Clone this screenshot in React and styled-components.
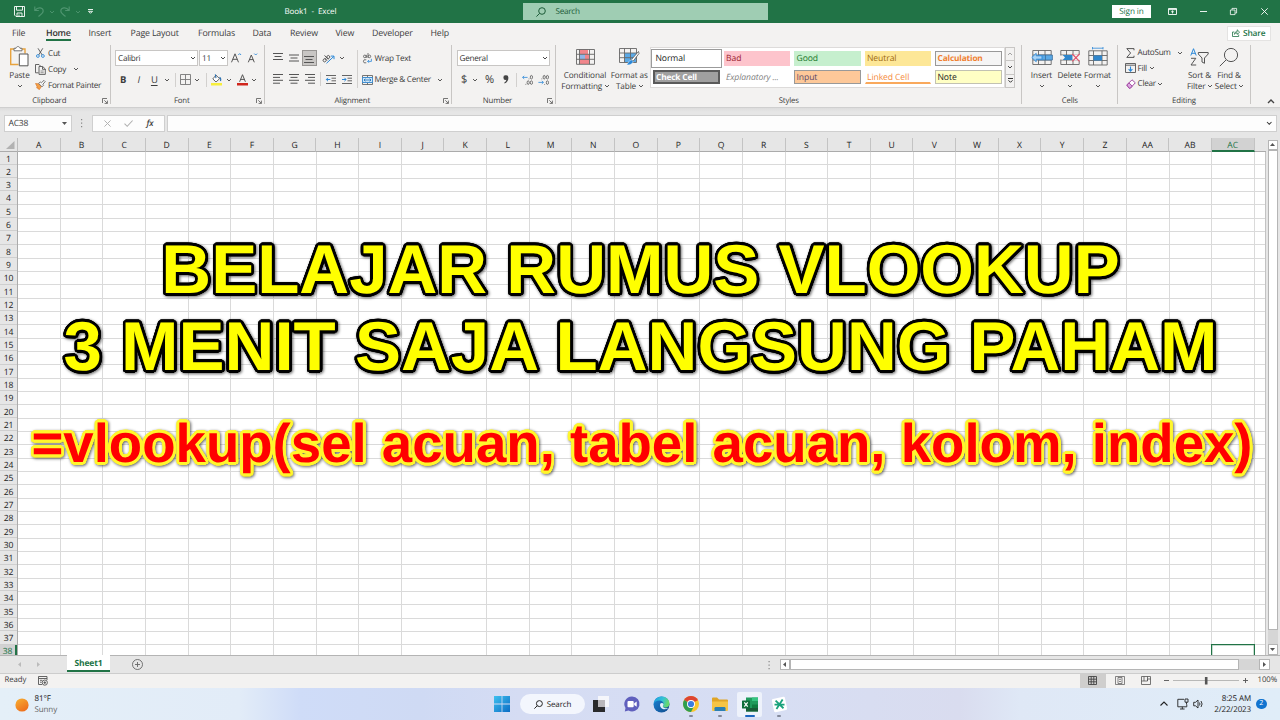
import React from "react";
import styled, { createGlobalStyle } from "styled-components";

const GlobalStyle = createGlobalStyle`
    * { box-sizing: border-box; }
    body {
        margin: 0;
        overflow: hidden;
        font-family: "Open Sans", "Noto Sans", sans-serif;
        color: #3c3c3c;
        text-rendering: geometricPrecision;
    }
    svg { display: block; flex: none; overflow: visible; }
`;

const Screen = styled.div`
    position: relative;
    display: flex;
    flex-direction: column;
    width: 1280px;
    height: 720px;
    overflow: hidden;
    background: #e6e6e6;
    font-size: 8.2px;
    letter-spacing: -0.28px;
    line-height: 11px;
    white-space: nowrap;
`;

/* ---------- title bar ---------- */

const TitleBar = styled.div`
    display: flex;
    align-items: center;
    flex: none;
    height: 23px;
    background: #217346;
    color: #fff;
`;

const QuickAccess = styled.div`
    display: flex;
    align-items: center;
    width: 284.5px;
    padding-left: 13px;
`;

const BookName = styled.div`
    width: 238px;
    font-size: 8px;
    letter-spacing: -0.1px;
    white-space: pre;
`;

const TitleSearch = styled.div`
    display: flex;
    align-items: center;
    gap: 10px;
    width: 245.5px;
    height: 17px;
    padding-left: 13px;
    background: #9fcdb3;
    color: #1d5c39;
`;

const SignIn = styled.div`
    width: 39px;
    height: 13px;
    margin-left: 344px;
    background: #fff;
    color: #217346;
    letter-spacing: -0.1px;
    line-height: 13px;
    text-align: center;
`;

const WindowButtons = styled.div`
    display: flex;
    align-items: center;
    padding-left: 6px;
    & > div {
        display: flex;
        justify-content: center;
        width: 30.7px;
    }
`;

/* ---------- ribbon ---------- */

const TabRow = styled.div`
    display: flex;
    flex: none;
    height: 21px;
    padding-left: 12px;
    background: #f3f2f1;
    font-size: 8.8px;
    letter-spacing: -0.15px;
`;

const Tab = styled.div`
    width: ${(p) => p.$w}px;
    padding-top: 4px;
    & span {
        display: inline-block;
        height: 14px;
        line-height: 12px;
        ${(p) => p.$active && "border-bottom: 2px solid #217346; color: #333; font-weight: 600; letter-spacing: -0.2px;"}
    }
`;

const Share = styled.div`
    display: flex;
    align-items: center;
    justify-content: center;
    gap: 3px;
    width: 44.5px;
    height: 15px;
    margin: 2.5px 9px 0 auto;
    border: 1px solid #e4e3e2;
    background: #fff;
    color: #217346;
    font-size: 8.4px;
    font-weight: 600;
`;

const Ribbon = styled.div`
    display: flex;
    flex: none;
    height: 63.5px;
    background: #f3f2f1;
    border-bottom: 1px solid #cfcfcf;
`;

const Group = styled.div`
    position: relative;
    display: flex;
    flex-direction: column;
    width: ${(p) => p.$w}px;
    flex: none;
    &::after {
        content: "";
        position: absolute;
        right: 0;
        top: 1px;
        width: 1px;
        height: 59px;
        background: #c8c6c4;
    }
`;

const GroupBody = styled.div`
    display: flex;
    height: 51px;
    padding-left: ${(p) => p.$pad || 0}px;
`;

const GroupLabel = styled.div`
    position: relative;
    height: 12px;
    padding-right: ${(p) => p.$shift || 0}px;
    line-height: 13.5px;
    text-align: center;
    font-size: 7.8px;
    letter-spacing: -0.15px;
    & svg {
        position: absolute;
        right: 3px;
        top: 3.5px;
    }
`;

const Stack = styled.div`
    display: flex;
    flex-direction: column;
    width: ${(p) => p.$w}px;
    flex: none;
    padding-top: ${(p) => p.$top || 0}px;
`;

const Row = styled.div`
    display: flex;
    align-items: center;
    height: ${(p) => p.$h}px;
`;

const Tool = styled.div`
    display: flex;
    align-items: center;
    justify-content: center;
    width: ${(p) => p.$w}px;
    height: 15.5px;
    flex: none;
    ${(p) => p.$on && "background: #c8c6c4; border: 1px solid #979593;"}
`;

const Label = styled.div`
    width: ${(p) => p.$w || "auto"};
    padding-left: ${(p) => p.$gap || 0}px;
    flex: none;
`;

const Divider = styled.div`
    width: 1px;
    height: ${(p) => p.$h || 14}px;
    margin: ${(p) => p.$m || "0"};
    background: #d2d0ce;
    flex: none;
`;

const BigTool = styled.div`
    display: flex;
    flex-direction: column;
    align-items: center;
    width: ${(p) => p.$w}px;
    flex: none;
    text-align: center;
    letter-spacing: -0.12px;
    & > div {
        display: flex;
        align-items: center;
        gap: 2.5px;
        height: 11px;
    }
`;

const BigIcon = styled.span`
    display: flex;
    align-items: center;
    justify-content: center;
    height: 25.5px;
`;

const Combo = styled.div`
    display: flex;
    align-items: center;
    justify-content: space-between;
    width: ${(p) => p.$w}px;
    height: 15.5px;
    margin-right: ${(p) => p.$mr || 0}px;
    padding: 0 2px;
    border: 1px solid #c8c6c4;
    background: #fff;
    color: #333;
`;

const Glyph = styled.span`
    font-size: ${(p) => p.$size || 10}px;
    font-weight: ${(p) => p.$weight || 400};
    font-style: ${(p) => (p.$italic ? "italic" : "normal")};
    text-decoration: ${(p) => (p.$under ? "underline" : "none")};
    text-underline-offset: 1.5px;
`;

const Gallery = styled.div`
    display: grid;
    grid-template-columns: repeat(5, 66.5px);
    grid-template-rows: 14.5px 14.5px;
    gap: 4px;
    width: 355px;
    height: 41px;
    margin-top: 3px;
    padding: 3px 0 0 2px;
    border: 1px solid #dddbda;
    background: #fff;
`;

const StyleCell = styled.div`
    padding-left: 1.5px;
    line-height: 13px;
    font-size: 8.6px;
    letter-spacing: -0.1px;
    background: ${(p) => p.$bg || "#fff"};
    color: ${(p) => p.$fg};
    font-weight: ${(p) => (p.$bold ? 700 : 400)};
    font-style: ${(p) => (p.$italic ? "italic" : "normal")};
    border: ${(p) => (p.$line ? `1px solid ${p.$line}` : "1px solid transparent")};
    ${(p) => p.$bold && "font-size: 8.3px; letter-spacing: -0.15px;"}
    ${(p) => p.$selected && "outline: 1px solid #9b9b9b; outline-offset: 1px; border-color: #fff;"}
    ${(p) => p.$underline && "border-bottom: 2px solid #f9a95c; line-height: 12px;"}
    ${(p) => p.$double && "border: 2px double #5a5a5a; line-height: 11px; padding-left: 1px;"}
`;

const Scroller = styled.div`
    display: flex;
    flex-direction: column;
    width: 10px;
    height: 41px;
    margin-top: 3px;
    & > div {
        display: flex;
        align-items: center;
        justify-content: center;
        flex: 1;
        border: 1px solid #c8c6c4;
        margin-top: -1px;
    }
    & > div:first-child { margin-top: 0; }
`;

const Collapse = styled.div`
    margin: 56px 0 0 17px;
`;

/* ---------- formula bar ---------- */

const FormulaRow = styled.div`
    display: flex;
    flex: none;
    height: 30.5px;
    padding: 7px 0 0 3.5px;
    background: linear-gradient(#dcdcdc, #e6e6e6 4px);
`;

const FormulaBox = styled.div`
    display: flex;
    align-items: center;
    width: ${(p) => p.$w}px;
    height: 17.5px;
    margin-right: ${(p) => p.$mr || 0}px;
    justify-content: ${(p) => p.$justify || "space-between"};
    padding: 0 4px;
    border: 1px solid #cfcfcf;
    background: #fdfdfd;
    font-size: 8.6px;
`;

const Dots = styled.div`
    width: 20.5px;
    padding: 4.5px 0 0 9px;
`;

/* ---------- sheet ---------- */

const HeaderRow = styled.div`
    display: flex;
    flex: none;
    height: 13.5px;
    font-size: 8.6px;
    font-weight: 500;
    letter-spacing: 0;
    color: #222;
`;

const Corner = styled.div`
    display: flex;
    justify-content: flex-end;
    width: 18px;
    padding: 3px 2px 0 0;
    border-right: 1px solid #bdbdbd;
    border-bottom: 1px solid #ababab;
    flex: none;
`;

const ColHead = styled.div`
    width: 42.65px;
    flex: none;
    line-height: 14px;
    text-align: center;
    border-right: 1px solid #c3c3c3;
    border-bottom: ${(p) => (p.$active ? "2px solid #217346" : "1px solid #ababab")};
    background: ${(p) => (p.$active ? "#d2d2d2" : "#e6e6e6")};
    color: ${(p) => (p.$active ? "#217346" : "#222")};
`;

const HeadEnd = styled.div`
    width: 11px;
    border-bottom: 1px solid #ababab;
`;

const SheetArea = styled.div`
    display: flex;
    flex: none;
    height: 503px;
`;

const RowHeads = styled.div`
    width: 18px;
    flex: none;
    overflow: hidden;
    border-right: 1px solid #ababab;
    font-size: 8.6px;
    font-weight: 500;
    letter-spacing: -0.1px;
    color: #222;
`;

const RowHead = styled.div`
    height: 13.335px;
    line-height: 14.6px;
    text-align: center;
    border-bottom: 1px solid #cfcfcf;
    ${(p) => p.$active && "height: 10px; line-height: 13px; background: #d2d2d2; color: #217346; border-right: 2px solid #217346; border-bottom: 0;"}
`;

const Cells = styled.div`
    position: relative;
    width: 1247.5px;
    flex: none;
    overflow: hidden;
    background-color: #fff;
    background-image:
        repeating-linear-gradient(90deg, transparent 0 41.65px, #dadada 41.65px 42.65px),
        repeating-linear-gradient(180deg, transparent 0 12.335px, #dadada 12.335px 13.335px);
    border-right: 1px solid #c3c3c3;
`;

const Cursor = styled.div`
    position: absolute;
    left: 1193px;
    top: 492px;
    width: 44px;
    height: 16px;
    border: 1px solid #217346;
    box-shadow: inset 0 0 0 0.5px rgba(33, 115, 70, 0.5);
`;

const VScroll = styled.div`
    display: flex;
    flex-direction: column;
    width: 10.5px;
    height: 515px;
    margin: -12px 0 0 2px;
`;

const ScrollButton = styled.div`
    display: flex;
    align-items: center;
    justify-content: center;
    width: ${(p) => p.$w || 10.5}px;
    height: 10.5px;
    flex: none;
    border: 1px solid #b5b5b5;
    background: #fff;
`;

const Thumb = styled.div`
    width: ${(p) => p.$w || 10.5}px;
    height: ${(p) => p.$h || 10.5}px;
    flex: none;
    border: 1px solid #b5b5b5;
    background: #fff;
`;

const Track = styled.div`
    flex: 1;
    align-self: stretch;
    background: #d6d6d6;
`;

const SheetTabs = styled.div`
    display: flex;
    flex: none;
    height: 19px;
    border-top: 1px solid #b4b4b4;
    border-bottom: 1px solid #cdcdcd;
`;

const NavArrows = styled.div`
    display: flex;
    gap: 14px;
    width: 67px;
    padding: 6px 0 0 17px;
`;

const SheetTab = styled.div`
    width: 43px;
    height: 17px;
    margin-top: -1px;
    border-bottom: 2px solid #217346;
    background: #fff;
    color: #217346;
    font-size: 8.5px;
    font-weight: 700;
    letter-spacing: -0.15px;
    line-height: 18px;
    text-align: center;
`;

const AddSheet = styled.div`
    width: 657.5px;
    padding: 3.5px 0 0 22px;
`;

const HScroll = styled.div`
    display: flex;
    width: 490px;
    height: 10.5px;
    margin: 3.5px 0 0 10px;
`;

const StatusBar = styled.div`
    display: flex;
    align-items: center;
    flex: none;
    height: 14.5px;
    padding-left: 4.5px;
    background: #f3f2f1;
    font-size: 7.8px;
    letter-spacing: -0.1px;
    line-height: 13px;
`;

const ViewButton = styled.div`
    display: flex;
    align-items: center;
    justify-content: center;
    width: 26.7px;
    height: 14.5px;
    background: ${(p) => (p.$on ? "#cfcecd" : "transparent")};
`;

/* ---------- taskbar ---------- */

const Taskbar = styled.div`
    display: flex;
    align-items: center;
    flex: none;
    height: 32px;
    background: linear-gradient(90deg, #e4eff8 0, #e2ecf8 240px, #cfdcf8 300px, #cfdaf4 420px, #d5dcf3 520px, #d7def3 780px, #d9dcef 960px, #dfe8f6 1020px, #e0edf8 1280px);
    color: #222;
    font-size: 8px;
    letter-spacing: -0.12px;
`;

const Weather = styled.div`
    display: flex;
    align-items: center;
    gap: 6px;
    width: 487.5px;
    padding: 1.5px 0 0 14.5px;
    line-height: 10.6px;
    & small {
        display: block;
        font-size: 8px;
        color: #666;
    }
`;

const TaskItem = styled.div`
    position: relative;
    display: flex;
    align-items: center;
    justify-content: center;
    width: ${(p) => p.$w || 29.5}px;
    height: 26px;
    flex: none;
    &::after {
        content: "";
        position: absolute;
        bottom: 0.5px;
        width: ${(p) => (p.$active ? 10 : 4)}px;
        height: 2px;
        border-radius: 1px;
        background: ${(p) => (p.$active ? "#1b66c0" : p.$running ? "#83899a" : "transparent")};
    }
`;

const ActivePlate = styled.div`
    display: flex;
    align-items: center;
    justify-content: center;
    width: 25px;
    height: 25px;
    border-radius: 2px;
    background: #eef2fb;
`;

const TaskSearch = styled.div`
    display: flex;
    align-items: center;
    justify-content: center;
    gap: 4px;
    width: 65px;
    height: 20px;
    margin-left: 3px;
    border-radius: 10px;
    background: #f3f6fd;
`;

const Tray = styled.div`
    display: flex;
    align-items: center;
    margin-left: auto;
    padding-right: 13.5px;
`;

const Clock = styled.div`
    width: 47px;
    padding-top: 1.5px;
    text-align: right;
    line-height: 10.6px;
`;

const Badge = styled.div`
    width: 10.5px;
    height: 10.5px;
    margin-left: 5px;
    border-radius: 50%;
    background: #1274cf;
    color: #fff;
    font-size: 7px;
    line-height: 10.5px;
    text-align: center;
`;

/* ---------- headline over the sheet ---------- */

// ring of hard shadows, gives the letters a round-cornered outline
const outline = (radius, color) =>
    Array.from({ length: 32 }, (_, i) => {
        const a = (i / 32) * Math.PI * 2;
        return `${(Math.cos(a) * radius).toFixed(2)}px ${(Math.sin(a) * radius).toFixed(2)}px 0 ${color}`;
    }).join(", ");

const Headline = styled.div`
    position: absolute;
    left: 0;
    top: 231px;
    width: 1280px;
    display: flex;
    flex-direction: column;
    align-items: center;
    font-family: "Liberation Sans", Arial, sans-serif;
    font-weight: 700;
    letter-spacing: 0;
    filter: drop-shadow(1px 1.5px 1.5px rgba(0, 0, 0, 0.6));
`;

const BigLine = styled.div`
    height: 77px;
    margin-left: 1px;
    line-height: 77px;
    font-size: 69px;
    color: #ffff00;
    text-shadow: ${outline(2.7, "#000")};
`;

const FormulaLine = styled.div`
    margin: 22px 0 0 4px;
    height: 72px;
    line-height: 73px;
    font-size: 54.6px;
    color: #ff0000;
    text-shadow: ${outline(2.7, "#fff62e")};
`;

/* ---------- icons ---------- */

const Chevron = ({ up, color = "#444", s = 4 }) => (
    <svg width={s} height={s / 2} viewBox="0 0 4 2" fill="none" stroke={color} strokeWidth="0.9">
        <path d={up ? "M0 2 2 0 4 2" : "M0 0 2 2 4 0"} />
    </svg>
);

const Triangle = ({ dir, color = "#555" }) => {
    const d = { up: "M0 4 2.5 1 5 4Z", down: "M0 1 2.5 4 5 1Z", left: "M4 0 1 2.5 4 5Z", right: "M1 0 4 2.5 1 5Z" }[dir];
    return <svg width="5" height="5" viewBox="0 0 5 5"><path d={d} fill={color} /></svg>;
};

const Launcher = () => (
    <svg width="6" height="6" viewBox="0 0 6 6" fill="none" stroke="#555" strokeWidth="0.8">
        <path d="M0.5 5V0.5H5M2.3 2.3 5.3 5.3M5.4 2.6V5.4H2.6" />
    </svg>
);

const Magnifier = ({ s, color, w = 1 }) => (
    <svg width={s} height={s} viewBox="0 0 10 10" fill="none" stroke={color} strokeWidth={w}>
        <circle cx="6" cy="4" r="3.3" /><path d="M3.6 6.4 0.4 9.6" />
    </svg>
);

const Lines = ({ rows, top = 0 }) => (
    <svg width="10" height="10" viewBox="0 0 10 10" stroke="#555" strokeWidth="1">
        {rows.map(([a, b], i) => <path key={i} d={`M${a} ${top + 0.5 + i * (rows.length === 4 ? 2.9 : 3)}H${b}`} />)}
    </svg>
);

const SaveIcon = () => (
    <svg width="11" height="11" viewBox="0 0 11 11" fill="none" stroke="#fff" strokeWidth="0.9">
        <path d="M0.5 0.5H10.5V10.5H2L0.5 9ZM2.5 0.5V4.2H8.5V0.5M3 10.5V7H8V10.5M5 8.5V10" />
    </svg>
);

const UndoIcon = ({ flip }) => (
    <svg width="10" height="11" viewBox="0 0 10 11" fill="none" stroke="#4f9570" strokeWidth="1.1">
        <g transform={flip ? "translate(10 0) scale(-1 1)" : ""}>
            <path d="M0.8 0.5V4.5H4.8M1 4.3C4 0.5 9.2 1.5 9.2 5 9.2 7.3 7 8.5 4.5 10.5" />
        </g>
    </svg>
);

const PasteIcon = () => (
    <svg width="19" height="21" viewBox="0 0 19 21" fill="none">
        <path d="M4 3H0.7V18.5H8.5M12 3H15V7.5" stroke="#e8a33d" strokeWidth="1.4" />
        <path d="M4 4.8V2.3H6C6.3 0 9.6 0 10 2.3H12V4.8Z" fill="#fff" stroke="#666" strokeWidth="0.9" />
        <path d="M9.3 8H18V19.8H9.3Z" fill="#fff" stroke="#555" strokeWidth="1" />
    </svg>
);

const CutIcon = () => (
    <svg width="9" height="10" viewBox="0 0 9 10" fill="none">
        <path d="M2 0.3 6.2 7M6.8 0.3 2.6 7" stroke="#555" strokeWidth="0.9" />
        <circle cx="1.9" cy="8" r="1.4" stroke="#2b88d8" strokeWidth="0.9" /><circle cx="6.9" cy="8" r="1.4" stroke="#2b88d8" strokeWidth="0.9" />
    </svg>
);

const CopyIcon = () => (
    <svg width="11" height="11" viewBox="0 0 11 11" fill="none" stroke="#555" strokeWidth="0.9">
        <path d="M3.5 8.8H0.5V0.5H4L5.5 2M4 2.5H7.7L10.3 5V10.4H4ZM7.5 2.7V5.3H10.3" />
        <path d="M5.5 7H8.7M5.5 8.7H8.7" strokeWidth="0.6" />
    </svg>
);

const PainterIcon = () => (
    <svg width="11" height="10" viewBox="0 0 11 10">
        <path d="M0.5 3.5 3.5 3.8 6.5 6.3 4.5 9.5 2.8 8.8 3 7.8 1.7 7.9 2 6.5Z" fill="#f3a04a" stroke="#d9701f" strokeWidth="0.6" />
        <path d="M3.7 3.5 5.3 1.9 6.3 2.8 9 0.4 10.2 1.6 7.8 4.3 8.6 5.3 7 6.7Z" fill="#fff" stroke="#555" strokeWidth="0.8" />
    </svg>
);

const BorderIcon = () => (
    <svg width="11" height="11" viewBox="0 0 11 11" fill="none" stroke="#777" strokeWidth="0.9">
        <path d="M0.5 0.5H10.5V10.5H0.5ZM5.5 0.5V10.5M0.5 5.5H10.5" />
    </svg>
);

const FillIcon = () => (
    <svg width="11" height="12" viewBox="0 0 11 12" fill="none">
        <path d="M5 1.2 8.6 4.7 5 8 1.8 4.9Z" fill="#fff" stroke="#555" strokeWidth="0.9" />
        <path d="M4.3 0.3 5 4.2M8.5 3.2Q10.4 4.5 9.5 7" stroke="#2b6fb0" strokeWidth="1.1" />
        <path d="M0 9H11V11.5H0Z" fill="#f7ee3c" />
    </svg>
);

const FontColorIcon = () => (
    <svg width="11" height="12" viewBox="0 0 11 12" fill="none">
        <path d="M2.6 7.8 5.5 0.7 8.4 7.8M3.6 5.4H7.4" stroke="#555" strokeWidth="1" />
        <path d="M0 9H11V11.5H0Z" fill="#d0261c" />
    </svg>
);

const FontSizeIcon = ({ up }) => (
    <svg width="11" height="10" viewBox="0 0 11 10" fill="none">
        <path d={up ? "M0.5 9.3 4 0.8 7.5 9.3M1.8 6.3H6.2" : "M1.3 9.3 4.3 2 7.3 9.3M2.4 6.6H6.2"} stroke="#555" strokeWidth="1" />
        <path d={up ? "M7.3 2 8.7 0.6 10.1 2" : "M7.3 0.6 8.7 2 10.1 0.6"} stroke="#2b88d8" strokeWidth="0.9" />
    </svg>
);

const OrientIcon = () => (
    <svg width="12" height="11" viewBox="0 0 12 11" fill="none">
        <g transform="translate(-0.8 3.4) rotate(-42 3 3)" stroke="#555" strokeWidth="0.9"><circle cx="1.9" cy="3.3" r="1.5" /><path d="M3.6 1.6V5M5.2 -0.4V5" /><circle cx="6.9" cy="3.3" r="1.5" /></g>
        <path d="M3.5 10.3 10.8 3.4M7.8 3.1H11V6.2" stroke="#2b88d8" strokeWidth="1" />
    </svg>
);

const IndentIcon = ({ right }) => (
    <svg width="10" height="9" viewBox="0 0 10 9" fill="none">
        <path d="M0 0.5H10M5.5 3.2H10M5.5 5.8H10M0 8.5H10" stroke="#555" strokeWidth="0.9" />
        <path d={right ? "M0 4.5H4M2.4 2.8 4.1 4.5 2.4 6.2" : "M4.3 4.5H0.4M2 2.8 0.3 4.5 2 6.2"} stroke="#2b88d8" strokeWidth="1" />
    </svg>
);

const WrapIcon = () => (
    <svg width="9" height="11" viewBox="0 0 9 11" fill="none" stroke="#555" strokeWidth="0.8">
        <circle cx="1.8" cy="3.4" r="1.3" /><path d="M3.3 1.9V4.9M5 0V4.9" /><circle cx="6.4" cy="3.4" r="1.3" />
        <path d="M3.3 6.8Q0.4 6 0.4 8.3T3.3 9.8" />
        <path d="M8.4 5.8V8.4H4.6M6 7 4.6 8.4 6 9.8" stroke="#2b88d8" />
    </svg>
);

const MergeIcon = () => (
    <svg width="11" height="10" viewBox="0 0 11 10" fill="none">
        <path d="M0.5 0.5H10.5V9.5H0.5ZM5.5 0.5V2.5M5.5 7.5V9.5M0.5 2.5H10.5M0.5 7.5H10.5" stroke="#555" strokeWidth="0.8" />
        <path d="M0.5 2.5H10.5V7.5H0.5Z" fill="#cfe6f8" stroke="#2b88d8" strokeWidth="0.8" />
        <path d="M2 5H9M3.4 3.7 2 5 3.4 6.3M7.6 3.7 9 5 7.6 6.3" stroke="#1f6fb5" strokeWidth="0.8" />
    </svg>
);

const DecimalIcon = ({ less }) => (
    <svg width="11" height="10" viewBox="0 0 11 10" fill="none" stroke="#555" strokeWidth="0.8">
        <ellipse cx="9.4" cy="2.2" rx="1.1" ry="1.8" /><ellipse cx="9.4" cy="7.6" rx="1.1" ry="1.8" />
        {less ? <ellipse cx="6.2" cy="2.2" rx="1.1" ry="1.8" /> : <ellipse cx="6.2" cy="7.6" rx="1.1" ry="1.8" />}
        <path d={less ? "M3.8 3.5V4.3M6.6 9V9.7" : "M3.8 8.9V9.7M7 3.5V4.3"} />
        <path d={less ? "M0.4 7.4H5.4M3.8 5.9 5.4 7.4 3.8 8.9" : "M5.6 2.4H0.6M2.2 0.9 0.6 2.4 2.2 3.9"} stroke="#2b88d8" />
    </svg>
);

const CondIcon = () => (
    <svg width="19" height="16" viewBox="0 0 19 16" fill="none">
        <path d="M3.5 0.5H12V5.3H3.5ZM3.5 10.3H13.5V15H3.5Z" fill="#f0868c" />
        <path d="M3.5 5.3H9V10.3H3.5Z" fill="#8fb6e8" />
        <path d="M9 5.3H13V10.3H9Z" fill="#f0868c" />
        <path d="M0.5 0.5H18.5V15.3H0.5ZM0.5 5.3H18.5M0.5 10.3H18.5M3.5 0.5V15.3M13.5 0.5V15.3" stroke="#666" strokeWidth="0.9" />
    </svg>
);

const TableIcon = () => (
    <svg width="20" height="18" viewBox="0 0 20 18" fill="none">
        <path d="M5.5 5H17.5V14.5H5.5Z" fill="#5aa9e6" />
        <path d="M0.5 0.5H17.5V14.5H0.5ZM0.5 5H17.5M0.5 9.7H17.5M5.5 0.5V14.5M11.5 0.5V14.5" stroke="#666" strokeWidth="0.9" />
        <path d="M19.5 3.5 12.5 11.5 14.3 13 20 5.5Z" fill="#fff" stroke="#555" strokeWidth="0.8" />
        <path d="M12.3 11.8 14.2 13.5C13.5 16.5 9.5 17.5 7.5 16.5 9.5 15.5 9.5 12.5 12.3 11.8Z" fill="#2b88d8" stroke="#fff" strokeWidth="0.5" />
    </svg>
);

const TableBase = () => (
    <path d="M0.8 2.5H19.2V16.5H0.8ZM0.8 7H19.2M0.8 12H19.2M6.5 2.5V16.5M13 2.5V16.5" fill="none" stroke="#666" strokeWidth="0.9" />
);

const InsertIcon = () => (
    <svg width="20" height="18" viewBox="0 0 20 18" fill="none">
        <TableBase />
        <path d="M6 7H20.4V12H6Z" fill="#5aa9e6" stroke="#3d6f9c" strokeWidth="0.8" /><path d="M13.5 7V12" stroke="#3d6f9c" strokeWidth="0.8" />
        <path d="M4.2 5.3 -0.2 9.5 4.2 13.7V11.2H10V7.8H4.2Z" fill="#a9d3f5" stroke="#2b88d8" strokeWidth="0.9" />
    </svg>
);

const DeleteIcon = () => (
    <svg width="20" height="18" viewBox="0 0 20 18" fill="none">
        <TableBase />
        <path d="M12.5 6.4H20.5V12.6H12.5ZM0 7.5H3.5V11.5H0Z" fill="#f3f2f1" />
        <path d="M2.8 7H12.3V12H2.8L5 9.5Z" fill="#2f86cc" />
        <path d="M12.3 6 19.5 13.3M19.5 6 12.3 13.3" stroke="#e0506a" strokeWidth="1.1" />
    </svg>
);

const FormatIcon = () => (
    <svg width="20" height="18" viewBox="0 0 20 18" fill="none">
        <path d="M0.8 2.8H19.2V17H0.8ZM0.8 7.5H19.2M0.8 12.5H19.2M5.5 2.8V17M14 2.8V17" stroke="#666" strokeWidth="0.9" />
        <path d="M5.5 7.5H14V12.5H5.5Z" fill="#2f86cc" />
        <path d="M4.5 -1V1.4M15 -1V1.4M4.5 0.2H15" stroke="#2b88d8" strokeWidth="0.8" />
    </svg>
);

const SumIcon = () => (
    <svg width="9" height="10" viewBox="0 0 9 10" fill="none" stroke="#555" strokeWidth="1">
        <path d="M8 2.3V0.6H0.8L4.6 5 0.8 9.4H8V7.7" />
    </svg>
);

const FillDownIcon = () => (
    <svg width="11" height="10" viewBox="0 0 11 10" fill="none">
        <path d="M0.5 0.5H10.5V9.5H0.5ZM0.5 2.2H10.5" stroke="#555" strokeWidth="0.9" />
        <path d="M5.5 3.5V8M3.6 6.2 5.5 8.1 7.4 6.2" stroke="#2b88d8" strokeWidth="1.1" />
    </svg>
);

const EraserIcon = () => (
    <svg width="10" height="10" viewBox="0 0 10 10" fill="none" stroke="#a349a4" strokeWidth="1">
        <path d="M0.8 6 6 0.8 9.3 3.8 4.3 9.2H3.2Z" fill="#fff" /><path d="M0.8 6 3 3.9 6.2 7.1 4.3 9.2H3.2Z" fill="#dba7e0" />
    </svg>
);

const SortIcon = () => (
    <svg width="19" height="18" viewBox="0 0 19 18" fill="none">
        <path d="M0.8 7.5 3.5 0.7 6.2 7.5M1.7 5.3H5.3" stroke="#2b88d8" strokeWidth="1" />
        <path d="M1 10.3H5.8L1 17H6.2" stroke="#555" strokeWidth="1" />
        <path d="M8.3 4.5H18.2V6L14.5 10V15.3L12 14V10L8.3 6Z" stroke="#555" strokeWidth="1" />
    </svg>
);

const StartIcon = () => (
    <svg width="16" height="16" viewBox="0 0 16 16">
        <defs><linearGradient id="win" x1="0" y1="0" x2="1" y2="1"><stop offset="0" stopColor="#3fc1f0" /><stop offset="1" stopColor="#0b6cc4" /></linearGradient></defs>
        <path d="M0 0H7.6V7.6H0ZM8.4 0H16V7.6H8.4ZM0 8.4H7.6V16H0ZM8.4 8.4H16V16H8.4Z" fill="url(#win)" />
    </svg>
);

const TaskViewIcon = () => (
    <svg width="16" height="16" viewBox="0 0 16 16">
        <path d="M5 0H16V11H5Z" fill="#f5f6fb" /><path d="M0 4H12V16H0Z" fill="#2a2a2c" /><path d="M5 4H12V11H5Z" fill="#b9b7bb" />
    </svg>
);

const ChatIcon = () => (
    <svg width="16" height="16" viewBox="0 0 16 16">
        <path d="M8 0.5A7.5 7.5 0 1 1 4.5 14.6L0.8 15.5 1.5 12A7.5 7.5 0 0 1 8 0.5Z" fill="#6060bd" />
        <rect x="3.5" y="5" width="6.2" height="6.2" rx="1" fill="#fff" /><path d="M10.2 7.3 12.7 5.5V10.7L10.2 9Z" fill="#fff" />
    </svg>
);

const EdgeIcon = () => (
    <svg width="17" height="17" viewBox="0 0 17 17">
        <defs>
            <linearGradient id="edgeTop" x1="0" y1="0" x2="1" y2="0.3"><stop offset="0" stopColor="#1b9de2" /><stop offset="0.6" stopColor="#35c1d6" /><stop offset="1" stopColor="#67d86d" /></linearGradient>
            <linearGradient id="edgeLow" x1="0" y1="0" x2="1" y2="1"><stop offset="0" stopColor="#1a86d8" /><stop offset="1" stopColor="#114a8b" /></linearGradient>
        </defs>
        <circle cx="8.5" cy="8.5" r="8" fill="url(#edgeLow)" />
        <path d="M0.6 8C1 3.5 4.5 0.5 8.6 0.5 13.2 0.5 16.5 3.8 16.5 7.5 16.5 10 14.7 11.5 12.5 11.5 10.5 11.5 9.8 10.7 9.8 10.2 9.8 9.8 10.6 9.3 10.6 8 10.6 6 8.6 4.6 6.3 4.6 3.5 4.6 1.2 6 0.6 8Z" fill="url(#edgeTop)" />
        <path d="M9.8 10.2C9.8 9.8 10.6 9.3 10.6 8 9.8 6.6 8.2 6.6 7.4 7.6 6.4 9.6 7.4 12.4 10.5 13.2 12.5 13.4 14 13 15.2 12.2 12 12.6 9.8 11.5 9.8 10.2Z" fill="#e6f1fa" />
    </svg>
);

const ChromeIcon = () => (
    <svg width="16" height="16" viewBox="0 0 16 16">
        <circle cx="8" cy="8" r="8" fill="#f9c52d" />
        <path d="M8 8 1.1 4A8 8 0 0 1 14.9 4Z" fill="#dd4433" />
        <path d="M8 8 1.1 4A8 8 0 0 0 8 16L11.2 9.8Z" fill="#2f9e50" />
        <path d="M8 4.2H15A8 8 0 0 0 14.9 4L8 3.6Z" fill="#dd4433" />
        <circle cx="8" cy="8" r="4" fill="#fff" /><circle cx="8" cy="8" r="3.1" fill="#3c7de0" />
    </svg>
);

const FolderIcon = () => (
    <svg width="16" height="15" viewBox="0 0 16 15">
        <path d="M0 1.5Q0 0.5 1 0.5H5L7 2.5H15Q16 2.5 16 3.5V6H0Z" fill="#e0a526" />
        <path d="M0 4.5H16V13Q16 14 15 14H1Q0 14 0 13Z" fill="#f6c444" />
        <path d="M2.5 14V11.2Q2.5 10 3.7 10H12.3Q13.5 10 13.5 11.2V14Z" fill="#2a7fb4" />
    </svg>
);

const ExcelIcon = () => (
    <svg width="16" height="15" viewBox="0 0 16 15" fill="none">
        <path d="M4 0.5H16V14.5H4Z" fill="#1f9b5c" /><path d="M10 0.5H16V4H10Z" fill="#35c481" /><path d="M10 7.5H16V11H10Z" fill="#107c41" /><path d="M4 11H16V14.5H4Z" fill="#185c37" />
        <rect x="0" y="3.5" width="8" height="8" rx="0.6" fill="#0f6d3b" />
        <path d="M2.3 5.3 5.7 9.7M5.7 5.3 2.3 9.7" stroke="#fff" strokeWidth="1.2" />
    </svg>
);

const RecorderIcon = () => (
    <svg width="15" height="15" viewBox="0 0 15 15">
        <g transform="rotate(-12 7.5 7.5)"><rect x="0.8" y="0.8" width="13.4" height="13.4" rx="1.5" fill="#fff" />
            <path d="M4.5 2.8 10.6 12M11.6 3.3 3.6 11.3M2.6 6.6 12.4 8.6" stroke="#1aa27c" strokeWidth="1.8" /></g>
    </svg>
);

const MacroIcon = () => (
    <svg width="10" height="10" viewBox="0 0 10 10" fill="none" stroke="#555" strokeWidth="0.9">
        <path d="M9 4V0.5H0.5V8.5H4M0.5 2.5H9M2 4.3H4.3M2 6.2H3.6" /><circle cx="6.8" cy="6.6" r="2.6" /><circle cx="6.8" cy="6.6" r="0.8" fill="#555" />
    </svg>
);

const TrayIcons = () => (
    <svg width="44" height="12" viewBox="0 0 44 12" fill="none" stroke="#222" strokeWidth="0.9">
        <path d="M0.5 7.5 4 4 7.5 7.5" strokeWidth="1.1" />
        <path d="M24 1.3H17.8V8.8H26.8V6.5M20 11H24.6M22.3 8.8V11M25 1H28V4.2H25ZM26.5 4.2V6.5" />
        <path d="M33.7 4.3H35.5L38 2V10L35.5 7.8H33.7ZM39.4 4.5Q40.6 6 39.4 7.5M41 3Q43.2 6 41 9" />
    </svg>
);

/* ---------- data ---------- */

const tabs = [["File", 34], ["Home", 42.5], ["Insert", 42], ["Page Layout", 67.5], ["Formulas", 54.5], ["Data", 37.5], ["Review", 45.5], ["View", 36.5], ["Developer", 58.5], ["Help", 30]];

const columns = [..."ABCDEFGHIJKLMNOPQRSTUVWXYZ", "AA", "AB", "AC"];
const rows = Array.from({ length: 38 }, (_, i) => i + 1);

const cellStyles = [
    { name: "Normal", $fg: "#222", $selected: true },
    { name: "Bad", $fg: "#9c1c2c", $bg: "#fdc4cc" },
    { name: "Good", $fg: "#1c7a2c", $bg: "#c6efce" },
    { name: "Neutral", $fg: "#a06a10", $bg: "#fde797" },
    { name: "Calculation", $fg: "#f08030", $bg: "#f5f5f5", $line: "#999", $bold: true },
    { name: "Check Cell", $fg: "#fff", $bg: "#a0a0a0", $bold: true, $double: true },
    { name: "Explanatory ...", $fg: "#7f7f7f", $italic: true },
    { name: "Input", $fg: "#5c4a6a", $bg: "#fdc899", $line: "#999" },
    { name: "Linked Cell", $fg: "#f58b3c", $underline: true },
    { name: "Note", $fg: "#222", $bg: "#ffffc4", $line: "#c2c2b2" },
];

const ClipboardGroup = () => (
    <Group $w={110.5}>
        <GroupBody $pad={4}>
            <BigTool $w={31}>
                <BigIcon><PasteIcon /></BigIcon>
                <div>Paste</div>
                <div><Chevron /></div>
            </BigTool>
            <Stack $top={1} $w={74}>
                <Row $h={16}><Tool $w={11}><CutIcon /></Tool><Label $gap={2}>Cut</Label></Row>
                <Row $h={16}><Tool $w={11}><CopyIcon /></Tool><Label $gap={2} $w="27.5px">Copy</Label><Chevron /></Row>
                <Row $h={16}><Tool $w={11}><PainterIcon /></Tool><Label $gap={2}>Format Painter</Label></Row>
            </Stack>
        </GroupBody>
        <GroupLabel $shift={12}>Clipboard<Launcher /></GroupLabel>
    </Group>
);

const FontGroup = () => (
    <Group $w={154.5}>
        <GroupBody $pad={4.5}>
            <Stack $top={6} $w={148}>
                <Row $h={16}>
                    <Combo $w={83} $mr={1}>Calibri<Chevron color="#333" /></Combo>
                    <Combo $w={28.5}>11<Chevron color="#333" /></Combo>
                    <Tool $w={17}><FontSizeIcon up /></Tool>
                    <Tool $w={16}><FontSizeIcon /></Tool>
                </Row>
                <Row $h={27}>
                    <Tool $w={16}><Glyph $weight={700} $size={9.5}>B</Glyph></Tool>
                    <Tool $w={15.5}><Glyph $italic $size={9.5}>I</Glyph></Tool>
                    <Tool $w={15.5}><Glyph $under $size={9.5}>U</Glyph></Tool>
                    <Tool $w={9}><Chevron /></Tool>
                    <Divider $m="0 0 0 4px" />
                    <Tool $w={18}><BorderIcon /></Tool>
                    <Tool $w={6.5}><Chevron /></Tool>
                    <Divider $m="0 0 0 5px" />
                    <Tool $w={19.5}><FillIcon /></Tool>
                    <Tool $w={5}><Chevron /></Tool>
                    <Tool $w={23}><FontColorIcon /></Tool>
                    <Tool $w={0}><Chevron /></Tool>
                </Row>
            </Stack>
        </GroupBody>
        <GroupLabel $shift={12}>Font<Launcher /></GroupLabel>
    </Group>
);

const AlignmentGroup = () => (
    <Group $w={186.5}>
        <GroupBody $pad={4.5}>
            <Stack $top={6} $w={86}>
                <Row $h={16}>
                    <Tool $w={16}><Lines rows={[[0, 10], [1.5, 8.5], [0, 10]]} /></Tool>
                    <Tool $w={16}><Lines rows={[[0, 10], [1.5, 8.5], [0, 10]]} top={1.5} /></Tool>
                    <Tool $w={15} $on><Lines rows={[[0, 10], [1.5, 8.5], [0, 10]]} top={3} /></Tool>
                    <Tool $w={25}><OrientIcon /></Tool>
                    <Tool $w={0}><Chevron /></Tool>
                </Row>
                <Row $h={26}>
                    <Tool $w={16}><Lines rows={[[0, 10], [0, 7], [0, 10], [0, 7]]} /></Tool>
                    <Tool $w={16}><Lines rows={[[0, 10], [1.5, 8.5], [0, 10], [1.5, 8.5]]} /></Tool>
                    <Tool $w={16}><Lines rows={[[0, 10], [3, 10], [0, 10], [3, 10]]} /></Tool>
                    <Divider $m="0 0 0 2px" />
                    <Tool $w={20}><IndentIcon /></Tool>
                    <Tool $w={12}><IndentIcon right /></Tool>
                </Row>
            </Stack>
            <Divider $h={38} $m="6px 4px 0 1px" />
            <Stack $top={6} $w={88}>
                <Row $h={16}><Tool $w={12}><WrapIcon /></Tool><Label $gap={1}>Wrap Text</Label></Row>
                <Row $h={27}><Tool $w={12}><MergeIcon /></Tool><Label $gap={1} $w="64.5px">Merge &amp; Center</Label><Chevron /></Row>
            </Stack>
        </GroupBody>
        <GroupLabel $shift={12}>Alignment<Launcher /></GroupLabel>
    </Group>
);

const NumberGroup = () => (
    <Group $w={104}>
        <GroupBody $pad={5}>
            <Stack $top={6} $w={95}>
                <Row $h={16}><Combo $w={93}>General<Chevron color="#333" /></Combo></Row>
                <Row $h={27}>
                    <Tool $w={15}><Glyph $size={11}>$</Glyph></Tool>
                    <Tool $w={7.5}><Chevron /></Tool>
                    <Tool $w={21}><Glyph $size={11}>%</Glyph></Tool>
                    <Tool $w={12}>
                        <svg width="6" height="9" viewBox="0 0 6 9"><path d="M3 0.3A2.3 2.3 0 0 1 5.4 2.7C5.4 5.5 4 7.6 1.4 8.5V7.5C2.8 6.8 3.3 5.8 3.3 4.8A2.3 2.3 0 1 1 3 0.3Z" fill="#444" /></svg>
                    </Tool>
                    <Divider $m="0 0 0 4px" />
                    <Tool $w={20}><DecimalIcon /></Tool>
                    <Tool $w={13}><DecimalIcon less /></Tool>
                </Row>
            </Stack>
        </GroupBody>
        <GroupLabel $shift={12}>Number<Launcher /></GroupLabel>
    </Group>
);

const StylesGroup = () => (
    <Group $w={466.5}>
        <GroupBody $pad={6}>
            <BigTool $w={47}>
                <BigIcon><CondIcon /></BigIcon>
                <div>Conditional</div>
                <div>Formatting <Chevron /></div>
            </BigTool>
            <BigTool $w={41.5}>
                <BigIcon><TableIcon /></BigIcon>
                <div>Format as</div>
                <div>Table <Chevron /></div>
            </BigTool>
            <Gallery>
                {cellStyles.map(({ name, ...look }) => <StyleCell key={name} {...look}>{name}</StyleCell>)}
            </Gallery>
            <Scroller>
                <div><Chevron up color="#999" /></div>
                <div><Chevron color="#333" /></div>
                <div><svg width="5" height="5" viewBox="0 0 5 5" fill="none" stroke="#333"><path d="M0 0.5H5M0.5 2.3 2.5 4.3 4.5 2.3" /></svg></div>
            </Scroller>
        </GroupBody>
        <GroupLabel>Styles</GroupLabel>
    </Group>
);

const CellsGroup = () => (
    <Group $w={95.5}>
        <GroupBody $pad={5.5}>
            {[["Insert", InsertIcon], ["Delete", DeleteIcon], ["Format", FormatIcon]].map(([name, Icon]) => (
                <BigTool $w={28} key={name}>
                    <BigIcon><Icon /></BigIcon>
                    <div>{name}</div>
                    <div><Chevron /></div>
                </BigTool>
            ))}
        </GroupBody>
        <GroupLabel>Cells</GroupLabel>
    </Group>
);

const EditingGroup = () => (
    <Group $w={133}>
        <GroupBody $pad={7}>
            <Stack $top={1} $w={60.5}>
                <Row $h={15.5}><Tool $w={12}><SumIcon /></Tool><Label $gap={1} $w="41px">AutoSum</Label><Chevron /></Row>
                <Row $h={15.5}><Tool $w={12}><FillDownIcon /></Tool><Label $gap={1} $w="13.5px">Fill</Label><Chevron /></Row>
                <Row $h={15.5}><Tool $w={12}><EraserIcon /></Tool><Label $gap={1} $w="21.5px">Clear</Label><Chevron /></Row>
            </Stack>
            <BigTool $w={29}>
                <BigIcon><SortIcon /></BigIcon>
                <div>Sort &amp;</div>
                <div>Filter <Chevron /></div>
            </BigTool>
            <BigTool $w={30}>
                <BigIcon><Magnifier s={20} color="#555" w={0.5} /></BigIcon>
                <div>Find &amp;</div>
                <div>Select <Chevron /></div>
            </BigTool>
        </GroupBody>
        <GroupLabel>Editing</GroupLabel>
    </Group>
);

function App() {
    return (
        <Screen>
            <GlobalStyle />
            <TitleBar>
                <QuickAccess>
                    <Tool $w={13}><SaveIcon /></Tool>
                    <Tool $w={26}><UndoIcon /></Tool>
                    <Tool $w={0}><Chevron color="#4f9570" /></Tool>
                    <Tool $w={26}><UndoIcon flip /></Tool>
                    <Tool $w={0}><Chevron color="#4f9570" /></Tool>
                    <Tool $w={25}>
                        <svg width="5" height="5" viewBox="0 0 5 5" fill="none" stroke="#fff" strokeWidth="0.9"><path d="M0 0.5H5M0.5 2.3 2.5 4.3 4.5 2.3Z" /></svg>
                    </Tool>
                </QuickAccess>
                <BookName>Book1  -  Excel</BookName>
                <TitleSearch><Magnifier s={10} color="#1d5c39" />Search</TitleSearch>
                <SignIn>Sign in</SignIn>
                <WindowButtons>
                    <div><svg width="9" height="7" viewBox="0 0 9 7" fill="none" stroke="#fff" strokeWidth="0.9"><path d="M0.5 0.5H8.5V6.5H0.5ZM0.5 1.6H8.5M4.5 5.5V3M3.2 4 4.5 2.8 5.8 4" /></svg></div>
                    <div><svg width="7" height="7" viewBox="0 0 7 7" stroke="#fff" strokeWidth="0.9"><path d="M0 3.5H7" /></svg></div>
                    <div><svg width="7" height="7" viewBox="0 0 7 7" fill="none" stroke="#fff" strokeWidth="0.8"><path d="M0.4 2H5V6.6H0.4ZM2 1.8V0.4H6.6V5H5.2" /></svg></div>
                    <div><svg width="7" height="7" viewBox="0 0 7 7" stroke="#fff" strokeWidth="0.9"><path d="M0.3 0.3 6.7 6.7M6.7 0.3 0.3 6.7" /></svg></div>
                </WindowButtons>
            </TitleBar>

            <TabRow>
                {tabs.map(([name, w]) => <Tab key={name} $w={w} $active={name === "Home"}><span>{name}</span></Tab>)}
                <Share>
                    <svg width="8" height="8" viewBox="0 0 8 8" fill="none" stroke="#217346" strokeWidth="0.8"><path d="M2.3 3H0.5V7.5H6.7V5.5M2.3 5.3Q2.6 2.6 5.2 2.6V0.8L7.6 3.2 5.2 5.4V3.9Q3.4 3.8 2.3 5.3Z" /></svg>
                    Share
                </Share>
            </TabRow>

            <Ribbon>
                <ClipboardGroup />
                <FontGroup />
                <AlignmentGroup />
                <NumberGroup />
                <StylesGroup />
                <CellsGroup />
                <EditingGroup />
                <Collapse><Chevron up s={6} color="#444" /></Collapse>
            </Ribbon>

            <FormulaRow>
                <FormulaBox $w={68}>AC38<Triangle dir="down" /></FormulaBox>
                <Dots><svg width="2" height="9" viewBox="0 0 2 9" fill="#888"><path d="M0 0H1.2V1.2H0ZM0 3.5H1.2V4.7H0ZM0 7H1.2V8.2H0Z" /></svg></Dots>
                <FormulaBox $w={73} $mr={2} $justify="space-around">
                    <svg width="7" height="7" viewBox="0 0 8 7" stroke="#b0b0b0" strokeWidth="1.1"><path d="M0.5 0 7.5 7M7.5 0 0.5 7" /></svg>
                    <svg width="9" height="7" viewBox="0 0 9 7" fill="none" stroke="#b0b0b0" strokeWidth="1.1"><path d="M0.5 3.7 3.2 6.3 8.6 0.5" /></svg>
                    <Glyph $italic $size={8.5} $weight={600}>fx</Glyph>
                </FormulaBox>
                <FormulaBox $w={1109.5} $justify="flex-end"><Chevron color="#333" s={4.5} /></FormulaBox>
            </FormulaRow>

            <HeaderRow>
                <Corner><svg width="9" height="8" viewBox="0 0 9 8"><path d="M8.5 0V8H0Z" fill="#b2b2b2" /></svg></Corner>
                {columns.map((c) => <ColHead key={c} $active={c === "AC"}>{c}</ColHead>)}
                <HeadEnd />
            </HeaderRow>

            <SheetArea>
                <RowHeads>
                    {rows.map((n) => <RowHead key={n} $active={n === 38}>{n}</RowHead>)}
                </RowHeads>
                <Cells><Cursor /></Cells>
                <VScroll>
                    <ScrollButton><Triangle dir="up" /></ScrollButton>
                    <Thumb $h={480} />
                    <Track />
                    <ScrollButton><Triangle dir="down" /></ScrollButton>
                </VScroll>
            </SheetArea>

            <SheetTabs>
                <NavArrows><Triangle dir="left" color="#bbb" /><Triangle dir="right" color="#bbb" /></NavArrows>
                <SheetTab>Sheet1</SheetTab>
                <AddSheet>
                    <svg width="11" height="11" viewBox="0 0 11 11" fill="none" stroke="#666" strokeWidth="0.9"><circle cx="5.5" cy="5.5" r="5" /><path d="M5.5 3V8M3 5.5H8" /></svg>
                </AddSheet>
                <svg width="2" height="18" viewBox="0 0 2 18" fill="#888"><path d="M0.5 5H1.7V6.2H0.5ZM0.5 8.5H1.7V9.7H0.5ZM0.5 12H1.7V13.2H0.5Z" /></svg>
                <HScroll>
                    <ScrollButton><Triangle dir="left" /></ScrollButton>
                    <Thumb $w={449} />
                    <Track />
                    <ScrollButton><Triangle dir="right" /></ScrollButton>
                </HScroll>
            </SheetTabs>

            <StatusBar>
                <Label $w="33.5px">Ready</Label>
                <Label $w="1041.5px"><MacroIcon /></Label>
                <ViewButton $on><svg width="9" height="9" viewBox="0 0 9 9" fill="none" stroke="#444" strokeWidth="0.9"><path d="M0.5 0.5H8.5V8.5H0.5ZM3.2 0.5V8.5M5.8 0.5V8.5M0.5 3.2H8.5M0.5 5.8H8.5" /></svg></ViewButton>
                <ViewButton><svg width="10" height="9" viewBox="0 0 10 9" fill="none" stroke="#555" strokeWidth="0.8"><path d="M0.5 0.5H9.5V8.5H0.5ZM3 1.5H7V7.5H3ZM4 3.3H6M4 5.5H6" strokeWidth="0.7" /></svg></ViewButton>
                <ViewButton><svg width="10" height="9" viewBox="0 0 10 9" fill="none" stroke="#555" strokeWidth="0.8"><path d="M0.5 0.5H9.5V8.5H0.5ZM3 0.5V5H6.5V0.5M0.5 5H3M6.5 5V3H9.5" /></svg></ViewButton>
                <Tool $w={92}>
                    <svg width="84" height="9" viewBox="0 0 84 9" fill="none" stroke="#555">
                        <path d="M0 4.5H5M79 4.5H84M81.5 2V7" strokeWidth="0.9" /><path d="M9 4.5H75" stroke="#a8a8a8" strokeWidth="0.8" /><path d="M42.2 1V8.5" strokeWidth="2.6" />
                    </svg>
                </Tool>
                <Label $gap={6}>100%</Label>
            </StatusBar>

            <Taskbar>
                <Weather>
                    <svg width="14" height="14" viewBox="0 0 14 14">
                        <defs><linearGradient id="sun" x1="0" y1="0" x2="0.6" y2="1"><stop offset="0" stopColor="#f8b133" /><stop offset="1" stopColor="#ee6f1c" /></linearGradient></defs>
                        <circle cx="7" cy="7" r="6.6" fill="url(#sun)" />
                    </svg>
                    <div>81°F<small>Sunny</small></div>
                </Weather>
                <TaskItem><StartIcon /></TaskItem>
                <TaskSearch><Magnifier s={9} color="#222" w={1.1} />Search</TaskSearch>
                <TaskItem $w={32}><TaskViewIcon /></TaskItem>
                <TaskItem><ChatIcon /></TaskItem>
                <TaskItem><EdgeIcon /></TaskItem>
                <TaskItem $running><ChromeIcon /></TaskItem>
                <TaskItem $running><FolderIcon /></TaskItem>
                <TaskItem $active><ActivePlate><ExcelIcon /></ActivePlate></TaskItem>
                <TaskItem $running><RecorderIcon /></TaskItem>
                <Tray>
                    <TrayIcons />
                    <Clock>8:25 AM<br />2/22/2023</Clock>
                    <Badge>2</Badge>
                </Tray>
            </Taskbar>

            <Headline>
                <BigLine>BELAJAR RUMUS VLOOKUP</BigLine>
                <BigLine>3 MENIT SAJA LANGSUNG PAHAM</BigLine>
                <FormulaLine>=vlookup(sel acuan, tabel acuan, kolom, index)</FormulaLine>
            </Headline>
        </Screen>
    );
}

export default App;
